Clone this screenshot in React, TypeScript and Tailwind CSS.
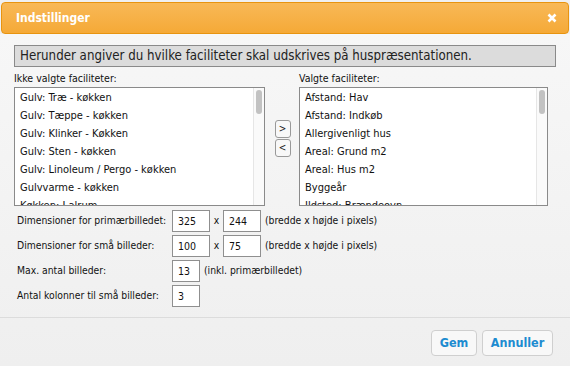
import React from "react";

const left = [
  "Gulv: Træ - køkken",
  "Gulv: Tæppe - køkken",
  "Gulv: Klinker - Køkken",
  "Gulv: Sten - køkken",
  "Gulv: Linoleum / Pergo - køkken",
  "Gulvvarme - køkken",
  "Køkken: I alrum",
];
const right = [
  "Afstand: Hav",
  "Afstand: Indkøb",
  "Allergivenligt hus",
  "Areal: Grund m2",
  "Areal: Hus m2",
  "Byggeår",
  "Ildsted: Brændeovn",
];

function ListBox({ items }: { items: string[] }) {
  return (
    <div className="relative h-[119px] border border-[#8a8a8a] bg-white overflow-hidden">
      <div className="pt-[1px] pl-[5px]">
        {items.map((t) => (
          <div key={t} className="h-[18px] leading-[18px] text-[11px] text-[#111] whitespace-nowrap">
            {t}
          </div>
        ))}
      </div>
      <div className="absolute right-0 top-0 bottom-0 w-[11px] bg-[#fafafa] border-l border-[#e6e6e6]">
        <div className="ml-[2px] mt-[2px] w-[6px] h-[24px] rounded-full bg-[#c2c2c2]" />
      </div>
    </div>
  );
}

function Input({ value, w }: { value: string; w: string }) {
  return (
    <div className={`${w} h-[22px] border border-[#8f8f8f] bg-white pl-[5px] text-[10.5px] leading-[20px] text-[#111]`}>
      {value}
    </div>
  );
}

export default function App() {
  return (
    <div
      className="w-[570px] h-[366px] bg-white relative overflow-hidden"
      style={{ fontFamily: '"DejaVu Sans Condensed", "DejaVu Sans", Verdana, sans-serif' }}
    >
      <div className="w-[570px] h-[366px] bg-[#f0f0f0] flex flex-col">
        <div className="mx-[1px] mt-[2px] h-[32px] rounded-[4px] border border-[#e8940f] bg-gradient-to-b from-[#f8b856] to-[#f5a936] flex items-center justify-between pl-[14px] pr-[11px]">
          <span className="text-white font-bold text-[12px]">Indstillinger</span>
          <svg width="10" height="10" viewBox="0 0 10 10">
            <path d="M1.5 1.5 L8.5 8.5 M8.5 1.5 L1.5 8.5" stroke="white" strokeWidth="2.6" strokeLinecap="butt" />
          </svg>
        </div>
        <div className="bg-gradient-to-b from-[#f7f7f7] to-[#efefef] flex-1 flex flex-col">
          <div className="mx-[14px] mt-[11px] h-[22px] border border-[#8a8a8a] bg-[#dcdcdc] pl-[5px] text-[13.2px] leading-[20px] text-[#222] whitespace-nowrap">
            Herunder angiver du hvilke faciliteter skal udskrives på huspræsentationen.
          </div>
          <div className="flex mt-[3px] ml-[14px]">
            <div className="w-[251px]">
              <div className="text-[10.5px] leading-[17px] text-[#111]">Ikke valgte faciliteter:</div>
              <ListBox items={left} />
            </div>
            <div className="w-[34px] flex flex-col items-center pt-[50px] pl-[1px] gap-[1px]">
              <button className="w-[16px] h-[18px] rounded-[3px] border border-[#999] bg-[#f8f8f8] text-[10px] leading-[14px] text-[#222]">&gt;</button>
              <button className="w-[16px] h-[18px] rounded-[3px] border border-[#999] bg-[#f8f8f8] text-[10px] leading-[14px] text-[#222]">&lt;</button>
            </div>
            <div className="w-[249px]">
              <div className="text-[10.5px] leading-[17px] text-[#111]">Valgte faciliteter:</div>
              <ListBox items={right} />
            </div>
          </div>
          <div className="ml-[17px] mt-[3px] flex flex-col gap-[2px] text-[10.3px] text-[#111] whitespace-nowrap">
            <div className="flex items-center h-[23px]">
              <span className="w-[155px]">Dimensioner for primærbilledet:</span>
              <Input value="325" w="w-[38px]" />
              <span className="w-[13px] text-center">x</span>
              <Input value="244" w="w-[38px]" />
              <span className="ml-[4px]">(bredde x højde i pixels)</span>
            </div>
            <div className="flex items-center h-[23px]">
              <span className="w-[155px]">Dimensioner for små billeder:</span>
              <Input value="100" w="w-[38px]" />
              <span className="w-[13px] text-center">x</span>
              <Input value="75" w="w-[38px]" />
              <span className="ml-[4px]">(bredde x højde i pixels)</span>
            </div>
            <div className="flex items-center h-[23px]">
              <span className="w-[155px]">Max. antal billeder:</span>
              <Input value="13" w="w-[28px]" />
              <span className="ml-[4px]">(inkl. primærbilledet)</span>
            </div>
            <div className="flex items-center h-[23px]">
              <span className="w-[155px]">Antal kolonner til små billeder:</span>
              <Input value="3" w="w-[28px]" />
            </div>
          </div>
          <div className="mt-[10px] border-t border-[#dcdcdc] flex justify-end gap-[5px] pr-[17px] pt-[12px]">
            <button className="w-[46px] h-[26px] rounded-[4px] border border-[#cfcfcf] bg-[#f8f8f8] text-[#1d8bd0] font-bold text-[12.5px]">Gem</button>
            <button className="w-[71px] h-[26px] rounded-[4px] border border-[#cfcfcf] bg-[#f8f8f8] text-[#1d8bd0] font-bold text-[12.5px]">Annuller</button>
          </div>
        </div>
      </div>
    </div>
  );
}
